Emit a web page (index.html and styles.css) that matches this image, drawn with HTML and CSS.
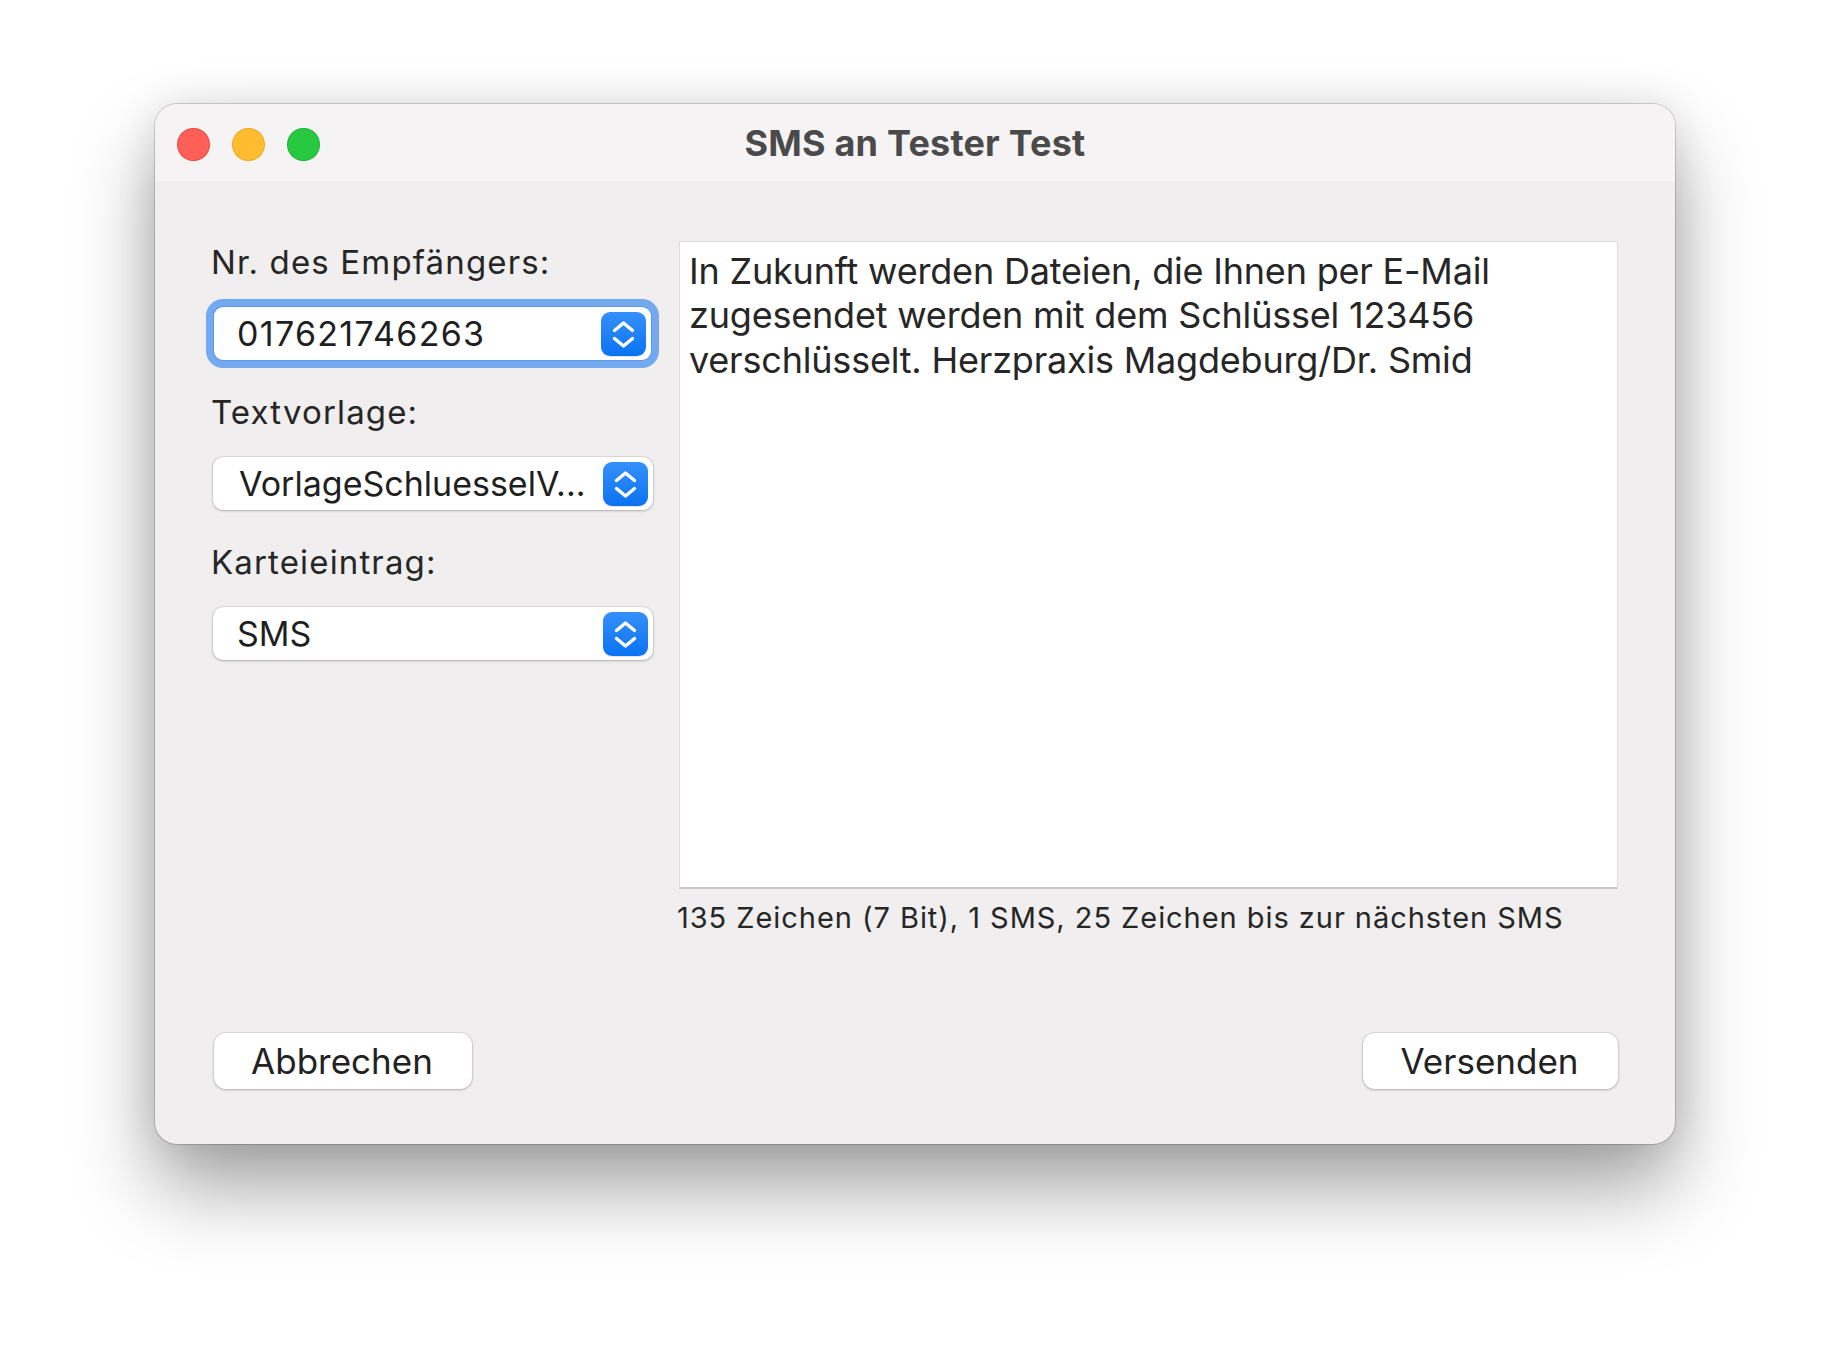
FILE: index.html
```html
<!DOCTYPE html>
<html lang="de">
<head>
<meta charset="utf-8">
<title>SMS an Tester Test</title>
<link rel="stylesheet" href="styles.css">
</head>
<body>
<div class="stage">
  <div class="window">
    <div class="titlebar">
      <div class="lights">
        <span class="light red"></span>
        <span class="light yellow"></span>
        <span class="light green"></span>
      </div>
      <div class="title">SMS an Tester Test</div>
      <div class="spacer"></div>
    </div>
    <div class="content">
      <div class="main">
        <div class="left">
          <div class="label">Nr. des Empfängers:</div>
          <div class="field focused">
            <span class="value number">017621746263</span>
            <span class="stepper"><svg viewBox="0 0 45 44" width="45" height="44"><path d="M13.5 18.5 L22.5 11 L31.5 18.5" /><path d="M13.5 26.5 L22.5 34 L31.5 26.5" /></svg></span>
          </div>
          <div class="label">Textvorlage:</div>
          <div class="field">
            <span class="value popup">VorlageSchluesselV...</span>
            <span class="stepper"><svg viewBox="0 0 45 44" width="45" height="44"><path d="M13.5 18.5 L22.5 11 L31.5 18.5" /><path d="M13.5 26.5 L22.5 34 L31.5 26.5" /></svg></span>
          </div>
          <div class="label">Karteieintrag:</div>
          <div class="field">
            <span class="value">SMS</span>
            <span class="stepper"><svg viewBox="0 0 45 44" width="45" height="44"><path d="M13.5 18.5 L22.5 11 L31.5 18.5" /><path d="M13.5 26.5 L22.5 34 L31.5 26.5" /></svg></span>
          </div>
        </div>
        <div class="right">
          <div class="textarea">
            <div class="line">In Zukunft werden Dateien, die Ihnen per E-Mail</div>
            <div class="line">zugesendet werden mit dem Schlüssel 123456</div>
            <div class="line">verschlüsselt. Herzpraxis Magdeburg/Dr. Smid</div>
          </div>
          <div class="counter">135 Zeichen (7 Bit), 1 SMS, 25 Zeichen bis zur nächsten SMS</div>
        </div>
      </div>
      <div class="footer">
        <div class="btn cancel">Abbrechen</div>
        <div class="btn send">Versenden</div>
      </div>
    </div>
  </div>
</div>
</body>
</html>
```

FILE: styles.css
```css
* { box-sizing: border-box; }

html, body {
  margin: 0;
  padding: 0;
  background: #ffffff;
  width: 1830px;
  height: 1350px;
  overflow: hidden;
  font-family: "Inter", "Noto Sans", "Liberation Sans", sans-serif;
  color: #262626;
}

.stage {
  padding: 104px 0 0 155px;
}

.window {
  width: 1520px;
  height: 1040px;
  border-radius: 22px;
  background: #f0eeef;
  display: flex;
  flex-direction: column;
  overflow: hidden;
  box-shadow:
    0 0 0 1px rgba(0, 0, 0, 0.16),
    0 44px 80px rgba(0, 0, 0, 0.36),
    0 0 40px rgba(0, 0, 0, 0.10);
}

.titlebar {
  height: 77px;
  flex: none;
  background: #f5f3f4;
  display: grid;
  grid-template-columns: 1fr auto 1fr;
  align-items: center;
}

.lights {
  display: flex;
  gap: 22px;
  padding-left: 22px;
  padding-top: 3px;
}

.light {
  width: 33px;
  height: 33px;
  border-radius: 50%;
  display: block;
}
.red { background: #fe5f57; box-shadow: inset 0 0 0 1px rgba(200, 40, 30, 0.35); }
.yellow { background: #febc2e; box-shadow: inset 0 0 0 1px rgba(200, 140, 20, 0.35); }
.green { background: #28c840; box-shadow: inset 0 0 0 1px rgba(20, 140, 40, 0.35); }

.title {
  font-weight: 700;
  font-size: 36px;
  color: #4b4a4b;
  line-height: 44px;
  letter-spacing: 0.2px;
}

.content {
  flex: 1;
  display: flex;
  flex-direction: column;
  padding: 60px 57px 55px 58px;
}

.main {
  display: flex;
  gap: 26px;
}

.left {
  width: 440px;
  flex: none;
  display: flex;
  flex-direction: column;
}

.label {
  font-size: 33px;
  line-height: 42px;
  height: 42px;
  margin-bottom: 24px;
  margin-left: -2px;
  letter-spacing: 1.15px;
  color: #262626;
}

.field {
  height: 53px;
  background: #ffffff;
  border-radius: 10px;
  display: flex;
  align-items: center;
  justify-content: space-between;
  padding: 0 5px 0 24px;
  margin-bottom: 31px;
  box-shadow:
    0 0 0 1px rgba(0, 0, 0, 0.07),
    0 1px 3px rgba(0, 0, 0, 0.22);
}

.field.focused {
  margin-left: 1px;
  margin-right: 2px;
  box-shadow:
    0 0 0 1px #5b98e8,
    0 0 0 8px #74a9ef;
  border-radius: 9px;
}

.value {
  font-size: 34px;
  color: #1f1f1f;
  line-height: 40px;
}
.value.number { letter-spacing: 1.3px; margin-left: -1px; }
.value.popup { padding-left: 2px; }

.stepper {
  width: 45px;
  height: 44px;
  border-radius: 9px;
  background: linear-gradient(#3690fb, #0a73f2);
  display: flex;
  box-shadow: 0 1px 1px rgba(0, 0, 0, 0.12);
}

.stepper svg {
  display: block;
  fill: none;
  stroke: #ffffff;
  stroke-width: 3.4;
  stroke-linecap: round;
  stroke-linejoin: round;
}

.right {
  flex: 1;
  display: flex;
  flex-direction: column;
}

.textarea {
  height: 648px;
  background: #ffffff;
  border: 1px solid #dddcdd;
  border-bottom: 2px solid #c7c6c7;
  padding: 7px 10px 7px 9px;
}

.line {
  font-size: 36px;
  line-height: 44.3px;
  letter-spacing: -0.2px;
  color: #262626;
  white-space: nowrap;
}

.counter {
  margin-top: 11px;
  margin-left: -2px;
  font-size: 29px;
  line-height: 35px;
  letter-spacing: 0.95px;
  color: #262626;
}

.footer {
  margin-top: auto;
  display: flex;
  justify-content: space-between;
}

.btn {
  height: 56px;
  background: #ffffff;
  border-radius: 12px;
  font-size: 35px;
  line-height: 56px;
  text-align: center;
  color: #222222;
  box-shadow:
    0 0 0 1px rgba(0, 0, 0, 0.07),
    0 1px 3px rgba(0, 0, 0, 0.22);
}
.cancel { width: 258px; margin-left: 1px; padding-right: 2px; }
.send { width: 255px; padding-right: 2px; }
```
